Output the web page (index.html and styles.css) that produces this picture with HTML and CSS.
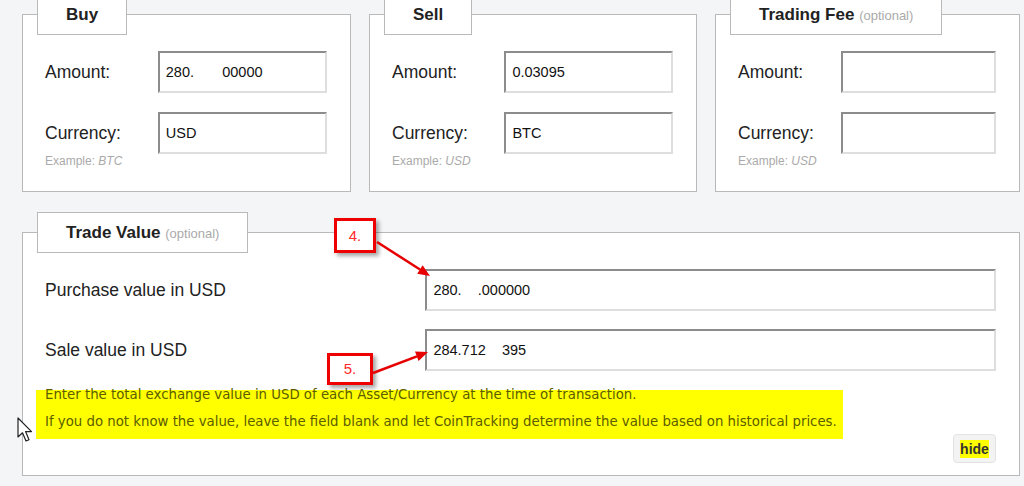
FILE: index.html
```html
<!DOCTYPE html>
<html lang="en">
  <head>
    <meta charset="UTF-8" />
    <meta name="viewport" content="width=device-width, initial-scale=1.0" />
    <title>Add Trade</title>
    <link rel="stylesheet" href="styles.css">
  </head>
  <body>
    <div class="page">
      <div class="top_row">
        <fieldset class="box box_buy">
          <legend>Buy</legend>
          <div class="fields">
            <label class="lbl">Amount:</label>
            <input class="txt" type="text" value="280.       00000" />
            <div class="lbl_col">
              <label class="lbl">Currency:</label>
              <div class="example">Example: <i>BTC</i></div>
            </div>
            <input class="txt" type="text" value="USD" />
          </div>
        </fieldset>

        <fieldset class="box box_sell">
          <legend>Sell</legend>
          <div class="fields">
            <label class="lbl">Amount:</label>
            <input class="txt" type="text" value="0.03095" />
            <div class="lbl_col">
              <label class="lbl">Currency:</label>
              <div class="example">Example: <i>USD</i></div>
            </div>
            <input class="txt" type="text" value="BTC" />
          </div>
        </fieldset>

        <fieldset class="box box_fee">
          <legend>Trading Fee <span class="optional">(optional)</span></legend>
          <div class="fields">
            <label class="lbl">Amount:</label>
            <input class="txt" type="text" value="" />
            <div class="lbl_col">
              <label class="lbl">Currency:</label>
              <div class="example">Example: <i>USD</i></div>
            </div>
            <input class="txt" type="text" value="" />
          </div>
        </fieldset>
      </div>

      <fieldset class="box box_value">
        <legend>Trade Value <span class="optional">(optional)</span></legend>
        <div class="fields value_fields">
          <label class="lbl">Purchase value in USD</label>
          <input class="txt" type="text" value="280.    .000000" />
          <label class="lbl">Sale value in USD</label>
          <input class="txt" type="text" value="284.712    395" />
        </div>
        <div class="note_row">
          <div class="note">
            <div class="note_line first">Enter the total exchange value in USD of each Asset/Currency at the time of transaction.</div>
            <div class="note_line">If you do not know the value, leave the field blank and let CoinTracking determine the value based on historical prices.</div>
          </div>
          <button class="hide_btn" type="button"><span>hide</span></button>
        </div>
      </fieldset>

      <!-- annotation marks from the screenshot -->
      <div class="callout callout_4">4.</div>
      <div class="callout callout_5">5.</div>
      <svg class="arrows" width="1024" height="486" viewBox="0 0 1024 486">
        <line x1="377" y1="242" x2="420" y2="269.5" stroke="#e60000" stroke-width="2.5" />
        <polygon points="430,276 417.2,273.7 422.6,265.3" fill="#e60000" />
        <line x1="373" y1="373" x2="417" y2="356.3" stroke="#e60000" stroke-width="2.5" />
        <polygon points="428,352 418.6,361 415,351.6" fill="#e60000" />
      </svg>
      <svg class="cursor" width="17" height="27" viewBox="0 0 17 27">
        <path d="M1 1 L1 20 L5.5 15.8 L9 24 L12 22.7 L8.6 14.6 L14.5 14.6 Z" fill="#fff" stroke="#222" stroke-width="1.2" stroke-linejoin="round" />
      </svg>
    </div>
  </body>
</html>
```

FILE: styles.css
```css
* {
  box-sizing: border-box;
}
body {
  margin: 0;
  background: #f4f5f7;
  font-family: "Liberation Sans", Arial, sans-serif;
  color: #222;
}
div.page {
  display: flow-root;
  position: relative; /* annotations sit over this */
  width: 1024px;
  height: 486px;
  overflow: hidden;
  padding-left: 22px;
}
div.top_row {
  display: flex;
  gap: 18px;
  margin-top: -6px;
}
fieldset.box {
  margin: 0;
  min-width: 0;
  border: 1px solid #b9b9b9;
  background: #fff;
  padding: 16px 23px 23px 14px;
}
fieldset.box_buy {
  width: 329px;
}
fieldset.box_sell {
  width: 328px;
}
fieldset.box_fee {
  width: 305px;
}
fieldset.box_value {
  width: 998px;
  margin-top: 20px;
  padding-bottom: 12px;
}
fieldset.box legend {
  height: 41px;
  line-height: 39px;
  padding: 0 28px;
  border: 1px solid #b9b9b9;
  background: #fff;
  font-size: 17px;
  font-weight: bold;
  color: #222;
}
legend span.optional {
  font-size: 13px;
  font-weight: normal;
  color: #aaa;
}
div.fields {
  display: grid;
  grid-template-columns: 40% 60%;
  row-gap: 19px;
  padding-left: 8px;
  align-items: start;
}
div.value_fields {
  row-gap: 18px;
}
label.lbl {
  display: block;
  font-size: 17.5px;
  line-height: 42px;
  color: #222;
}
div.example {
  font-size: 12px;
  line-height: 14px;
  color: #aaa;
}
input.txt {
  display: block;
  width: 100%;
  height: 42px;
  margin: 0;
  padding: 0 6px;
  background: #fff;
  border: 2px solid;
  border-color: #8c8c8c #dedede #dedede #8c8c8c;
  font-family: "Liberation Sans", Arial, sans-serif;
  font-size: 14.5px;
  color: #111;
  outline: none;
}
div.note_row {
  display: flex;
  justify-content: space-between;
  margin-top: 19px;
  padding-left: 8px;
  min-height: 73px;
}
div.note {
  align-self: flex-start;
  margin-left: -9px;
  padding: 0 6px 4px 9px;
  background: #ffff00;
  color: #5c5c00;
  font-family: "DejaVu Sans", sans-serif;
  font-size: 13.3px;
}
div.note_line {
  line-height: 26px;
}
div.note_line.first {
  line-height: 10px;
  margin-bottom: 9px;
}
button.hide_btn {
  align-self: flex-end;
  width: 43px;
  height: 29px;
  padding: 0;
  background: #f3f3f3;
  border: 1px solid #e3e3e3;
  border-radius: 4px;
  font-family: "Liberation Sans", Arial, sans-serif;
  font-size: 14px;
  font-weight: bold;
  color: #333;
}
button.hide_btn span {
  background: #ffff00;
  padding: 1px 0;
}
div.callout {
  position: absolute;
  border: 3px solid #ee0000;
  background: #fff;
  color: #ff2a2a;
  font-size: 15px;
  text-align: center;
  box-shadow: 3px 3px 4px rgba(0, 0, 0, 0.35);
}
div.callout_4 {
  left: 334px;
  top: 218px;
  width: 42px;
  height: 35px;
  line-height: 29px;
}
div.callout_5 {
  left: 327px;
  top: 353px;
  width: 46px;
  height: 32px;
  line-height: 26px;
}
svg.arrows {
  position: absolute;
  left: 0;
  top: 0;
  pointer-events: none;
}
svg.cursor {
  position: absolute;
  left: 17px;
  top: 417px;
}
```
